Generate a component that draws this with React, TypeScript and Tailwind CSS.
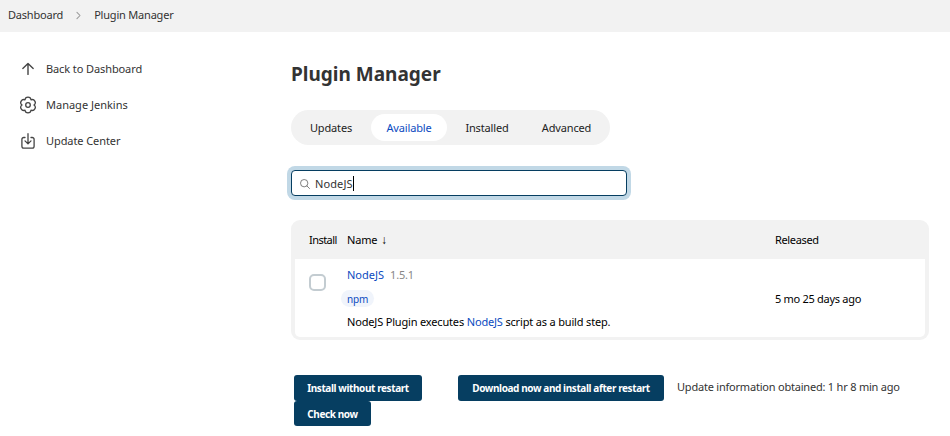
import type { ReactNode } from 'react';
import { IoChevronForward, IoSearchOutline } from 'react-icons/io5';

const stroke = {
  fill: 'none',
  stroke: 'currentColor',
  strokeLinecap: 'round',
  strokeLinejoin: 'round',
} as const;

function ArrowUpIcon() {
  return (
    <svg viewBox="0 0 18 18" className="size-[18px] shrink-0 text-[#444]" {...stroke} strokeWidth="1.4">
      <path d="M3.8 8.4 9 3.6l5.2 4.8M9 3.8v10.6" />
    </svg>
  );
}

function GearIcon() {
  return (
    <svg viewBox="0 0 18 18" className="size-[18px] shrink-0 text-[#444]" {...stroke} strokeWidth="1.3">
      <circle cx="9" cy="9" r="2.3" />
      <path d="M15 9A3.02 3.02 0 0 1 12 14.2A3.02 3.02 0 0 1 6 14.2A3.02 3.02 0 0 1 3 9A3.02 3.02 0 0 1 6 3.8A3.02 3.02 0 0 1 12 3.8A3.02 3.02 0 0 1 15 9Z" />
    </svg>
  );
}

function DownloadIcon() {
  return (
    <svg viewBox="0 0 18 18" className="size-[18px] shrink-0 text-[#444]" {...stroke} strokeWidth="1.3">
      <path d="M6 5.5H4.8A1.9 1.9 0 0 0 2.9 7.4v6.8a1.9 1.9 0 0 0 1.9 1.9h8.4a1.9 1.9 0 0 0 1.9-1.9V7.4a1.9 1.9 0 0 0-1.9-1.9H12M6 8.9l3 3 3-3M9 1.7v10" />
    </svg>
  );
}

function SideLink({ icon, children }: { icon: ReactNode; children: ReactNode }) {
  return (
    <a className="flex h-9 items-center gap-[9px] whitespace-nowrap text-[#333]">
      {icon}
      <span>{children}</span>
    </a>
  );
}

function Tab({ active, width, children }: { active?: boolean; width: string; children: ReactNode }) {
  return (
    <a
      className={`flex h-[27px] items-center justify-center rounded-full ${width} ${
        active ? 'bg-white text-[#0b4bbf]' : 'text-[#222]'
      }`}
    >
      {children}
    </a>
  );
}

function Button({ className, children }: { className: string; children: ReactNode }) {
  return (
    <button
      className={`flex items-center justify-center rounded-[3px] bg-[#063e61] text-[10px] font-bold tracking-[-0.4px] whitespace-nowrap text-white ${className}`}
    >
      {children}
    </button>
  );
}

export default function App() {
  return (
    <div className="h-[436px] w-[950px] overflow-hidden bg-white font-['Noto_Sans',sans-serif] text-[11px] leading-4 text-[#333]">
      <header className="flex h-8 items-center bg-[#f2f2f2] pb-[2px] pl-2 tracking-[-0.2px]">
        <span>Dashboard</span>
        <IoChevronForward className="mx-[10px] size-[11px] text-[#999]" />
        <span>Plugin Manager</span>
      </header>
      <div className="flex">
        <nav className="w-[291px] pt-[19px] pl-[19px]">
          <SideLink icon={<ArrowUpIcon />}>
            <span className="tracking-[-0.1px]">Back to Dashboard</span>
          </SideLink>
          <SideLink icon={<GearIcon />}>Manage Jenkins</SideLink>
          <SideLink icon={<DownloadIcon />}>
            <span className="tracking-[-0.08px]">Update Center</span>
          </SideLink>
        </nav>
        <main className="w-[638px] pt-7">
          <h1 className="h-[50px] text-[19px] leading-7 font-bold whitespace-nowrap">Plugin Manager</h1>
          <div className="flex h-[35px] w-[319px] items-center rounded-full bg-[#f2f2f2] pl-1 tracking-[-0.15px]">
            <Tab width="w-[72px] mr-1">Updates</Tab>
            <Tab width="w-[76px]" active>Available</Tab>
            <Tab width="w-[80px]">Installed</Tab>
            <Tab width="w-[79px]">Advanced</Tab>
          </div>
          <div className="mt-[25px] flex h-[26px] w-[336px] items-center rounded-[4px] border border-[#063e61] bg-white pt-px pl-[7px] ring-4 ring-[#c1d8e6]">
            <IoSearchOutline className="size-[12px] text-[#555]" />
            <span className="ml-[4px] tracking-[0.1px]">NodeJS</span>
            <span className="h-[15px] w-px bg-black" />
          </div>
          <div className="mt-6 h-[120px] rounded-[9px] bg-[#f2f2f2] px-1 pb-[3px] tracking-[-0.17px] text-black">
            <div className="flex h-[39px] items-center pl-[14px]">
              <span className="w-[38px] tracking-[-0.55px]">Install</span>
              <span className="w-[428px]">
                Name <span className="ml-[1px] text-[12px]">↓</span>
              </span>
              <span className="tracking-[-0.35px]">Released</span>
            </div>
            <div className="flex h-[78px] rounded-b-[5px] bg-white pl-[14px]">
              <div className="w-[38px] pt-[15px]">
                <div className="size-[17px] rounded-[5px] border-2 border-[#c3ccd1]" />
              </div>
              <div className="w-[428px] pt-2">
                <div className="flex h-[23px] gap-[6px]">
                  <a className="tracking-normal text-[#0b4bbf]">NodeJS</a>
                  <span className="text-[#888]">1.5.1</span>
                </div>
                <div className="-ml-[6px] flex h-[17px] w-[33px] items-center justify-center rounded-full bg-[#f0f4fb] text-[10px] text-[#0b4bbf]">
                  npm
                </div>
                <div className="mt-[7px] whitespace-nowrap">
                  NodeJS Plugin executes <a className="text-[#0b4bbf]">NodeJS</a> script as a build step.
                </div>
              </div>
              <span className="pt-8 tracking-[-0.29px] whitespace-nowrap">5 mo 25 days ago</span>
            </div>
          </div>
          <div className="mt-[35px] flex pl-[3px]">
            <Button className="h-[26px] w-[128px]">Install without restart</Button>
            <Button className="ml-9 h-[26px] w-[206px]">Download now and install after restart</Button>
            <span className="ml-[13px] pt-1 tracking-[-0.21px] whitespace-nowrap">
              Update information obtained: 1 hr 8 min ago
            </span>
          </div>
          <div className="pl-[3px]">
            <Button className="h-[25px] w-[77px]">Check now</Button>
          </div>
        </main>
      </div>
    </div>
  );
}
